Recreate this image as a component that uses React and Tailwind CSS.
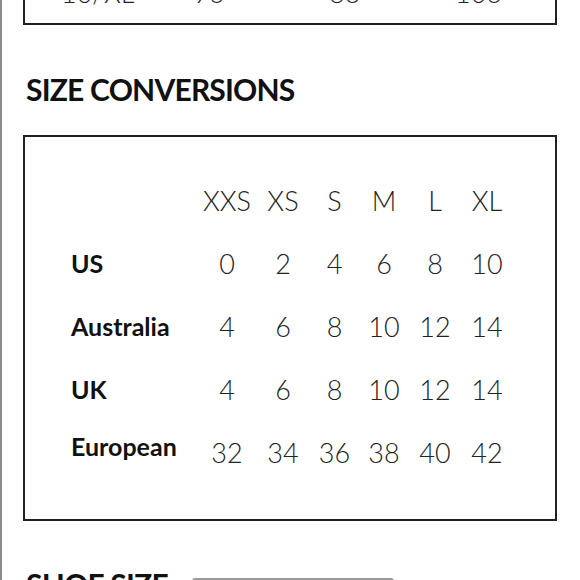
const sizes = ['XXS', 'XS', 'S', 'M', 'L', 'XL']

const rows = [
  { label: 'US', values: ['0', '2', '4', '6', '8', '10'] },
  { label: 'Australia', values: ['4', '6', '8', '10', '12', '14'] },
  { label: 'UK', values: ['4', '6', '8', '10', '12', '14'] },
  { label: 'European', values: ['32', '34', '36', '38', '40', '42'], raise: true },
]

const colWidths = ['w-[58px]', 'w-[54px]', 'w-[49px]', 'w-[50px]', 'w-[52px]', 'w-[52px]']

function Row({ label, values, raise }) {
  return (
    <div className="flex h-[63px] items-center">
      <div className={`w-[127px] text-[25px] font-bold text-[#111] ${raise ? 'mb-[12px]' : ''}`}>{label}</div>
      {values.map((v, i) => (
        <div key={i} className={`${colWidths[i]} text-center text-[27px] font-light text-[#222]`}>
          {v}
        </div>
      ))}
    </div>
  )
}

export default function App() {
  return (
    <div className="h-[580px] overflow-hidden border-l-2 border-[#8a8a8a] bg-white font-['Lato',sans-serif] leading-none">
      {/* previous chart, cut off at the top */}
      <div className="ml-[21px] flex h-[25px] w-[534px] items-end border-x-2 border-b-2 border-[#222] pb-[17px] text-[27px] font-light text-[#222]">
        <span className="ml-[36px] w-[132px]">10/XL</span>
        <span className="w-[136px]">96</span>
        <span className="w-[126px]">83</span>
        <span>106</span>
      </div>

      <h2 className="ml-[24px] mt-[49px] text-[30px] font-bold tracking-[-0.8px] text-[#111]">SIZE CONVERSIONS</h2>

      <div className="ml-[21px] mt-[31px] w-[534px] border-2 border-[#222] pb-[35px] pl-[46px] pt-[32px]">
        <div className="flex h-[63px] items-center">
          <div className="w-[127px]" />
          {sizes.map((s, i) => (
            <div key={s} className={`${colWidths[i]} text-center text-[27px] font-light text-[#222]`}>
              {s}
            </div>
          ))}
        </div>
        {rows.map((r) => (
          <Row key={r.label} {...r} />
        ))}
      </div>

      <div className="ml-[24px] mt-[48px] flex items-start">
        <h2 className="w-[166px] text-[30px] font-bold tracking-[-0.8px] text-[#111]">SHOE SIZE</h2>
        <div className="mt-[9px] h-[10px] w-[202px] rounded-t-[3px] border-t-2 border-[#9a9a9a]" />
      </div>
    </div>
  )
}
